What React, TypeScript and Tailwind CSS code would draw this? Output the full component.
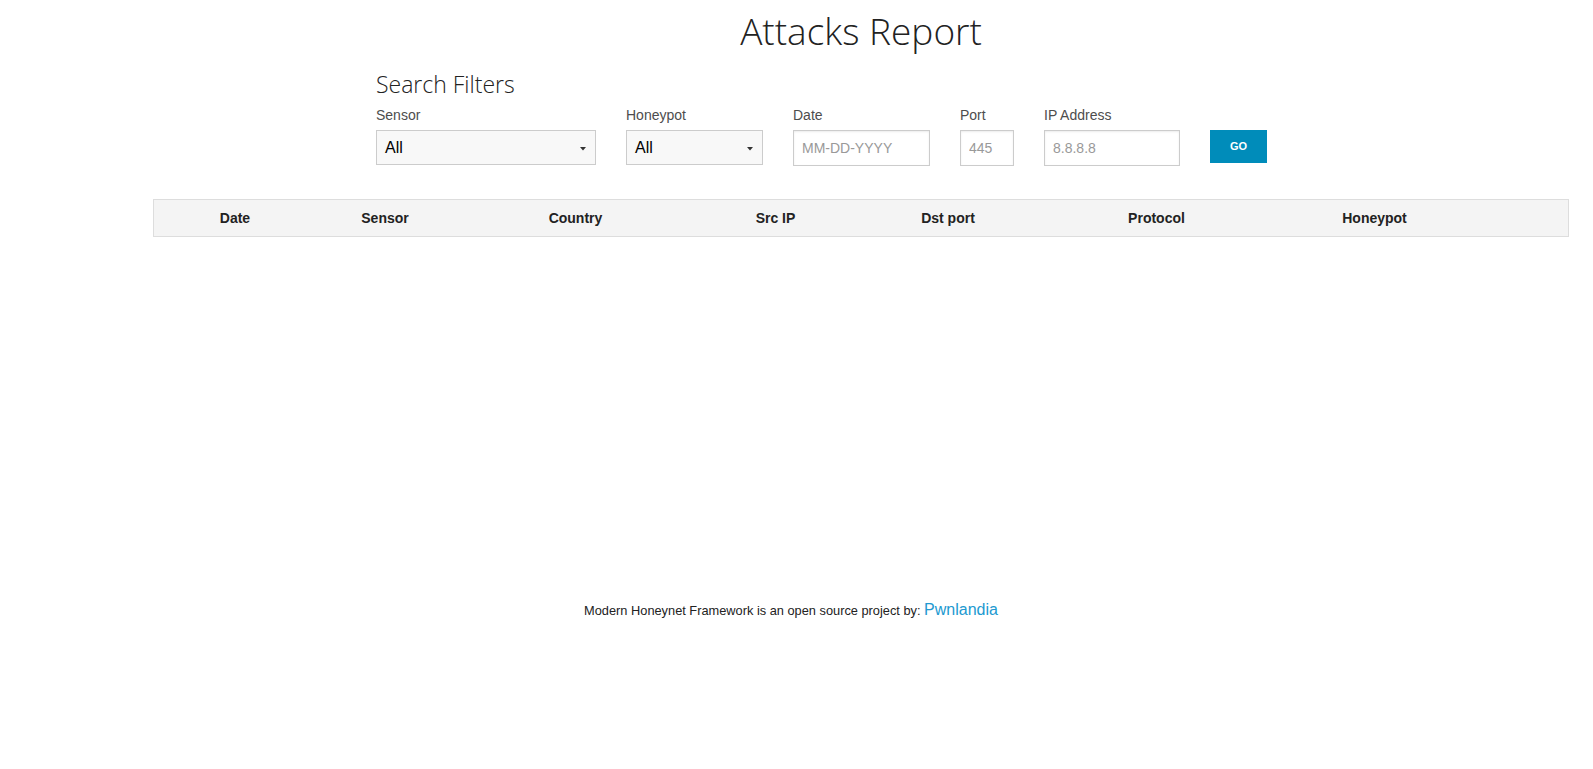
import React from "react";

const sans = { fontFamily: '"Liberation Sans", Arial, sans-serif' };

function Caret() {
  return (
    <svg width="6" height="4" viewBox="0 0 6 4" className="absolute right-[9px] top-[16px]">
      <path d="M0 0 L6 0 L3 3.5 Z" fill="#333" />
    </svg>
  );
}

function FakeSelect({ w }: { w: string }) {
  return (
    <div className={`relative h-[35px] ${w} border border-[#cccccc] bg-[#f8f8f8] flex items-center pl-[8px] text-[16px] text-black`}>
      All
      <Caret />
    </div>
  );
}

function Field({ label, children }: { label: string; children: React.ReactNode }) {
  return (
    <div className="flex flex-col">
      <div className="h-[20px] leading-[20px] text-[14px] text-[#4d4d4d] mb-[5px]">{label}</div>
      {children}
    </div>
  );
}

function TextInput({ w, ph }: { w: string; ph: string }) {
  return (
    <input
      readOnly
      placeholder={ph}
      className={`h-[36px] ${w} border border-[#cccccc] bg-white px-[8px] text-[14px] text-[#333] placeholder:text-[#999999] outline-none shadow-[inset_0_1px_2px_rgba(0,0,0,0.08)]`}
      style={sans}
    />
  );
}

const cols: [string, string][] = [
  ["Date", "w-[162px]"],
  ["Sensor", "w-[138px]"],
  ["Country", "w-[243px]"],
  ["Src IP", "w-[157px]"],
  ["Dst port", "w-[188px]"],
  ["Protocol", "w-[229px]"],
  ["Honeypot", "w-[207px]"],
];

export default function App() {
  return (
    <div className="min-h-screen w-full bg-white text-[#222222]" style={sans}>
      <div className="pl-[153px] w-[1569px]">
        <h1
          className="mt-[10px] text-center text-[37px] leading-[42px] font-light text-[#222222]"
          style={{ fontFamily: '"Open Sans", sans-serif' }}
        >
          Attacks Report
        </h1>

        <div className="ml-[223px] mt-[19px]">
          <h2
            className="text-[23px] leading-[26px] font-light text-[#222222]"
            style={{ fontFamily: '"Open Sans", sans-serif' }}
          >
            Search Filters
          </h2>
          <div className="mt-[8px] flex gap-[30px]">
            <Field label="Sensor">
              <FakeSelect w="w-[220px]" />
            </Field>
            <Field label="Honeypot">
              <FakeSelect w="w-[137px]" />
            </Field>
            <Field label="Date">
              <TextInput w="w-[137px]" ph="MM-DD-YYYY" />
            </Field>
            <Field label="Port">
              <TextInput w="w-[54px]" ph="445" />
            </Field>
            <Field label="IP Address">
              <TextInput w="w-[136px]" ph="8.8.8.8" />
            </Field>
            <div className="flex flex-col">
              <div className="h-[25px]" />
              <button className="h-[33px] w-[57px] bg-[#008cba] text-white text-[11px] font-bold flex items-center justify-center">
                GO
              </button>
            </div>
          </div>
        </div>

        <div className="mt-[33px] h-[38px] border border-[#dddddd] bg-[#f4f4f4] flex items-center">
          {cols.map(([t, w]) => (
            <div key={t} className={`${w} text-center text-[14px] font-bold text-[#222222]`}>
              {t}
            </div>
          ))}
        </div>
      </div>

      <div className="mt-[363px] pr-[11px] text-center text-[12.8px] leading-[20px] text-[#222222]">
        Modern Honeynet Framework is an open source project by:{" "}
        <a className="text-[16px] text-[#2199d0]" href="#">
          Pwnlandia
        </a>
      </div>
    </div>
  );
}
